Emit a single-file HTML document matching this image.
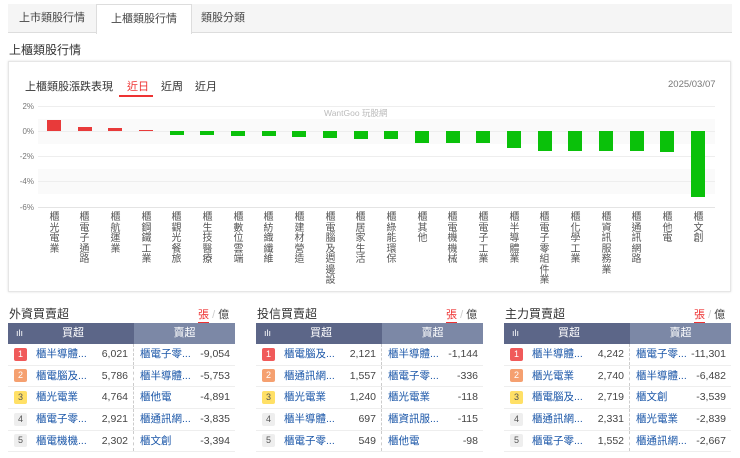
<!DOCTYPE html>
<html><head><meta charset="utf-8"><style>
*{margin:0;padding:0;box-sizing:border-box}
body{width:740px;height:458px;background:#fff;font-family:"Liberation Sans","Noto Sans CJK TC",sans-serif;position:relative;overflow:hidden;color:#333}
.a{position:absolute}
.tabs{left:8px;top:4px;width:724px;height:29px;background:#f5f5f5;border-bottom:1px solid #ddd}
.tab{position:absolute;top:0;height:29px;line-height:29px;font-size:11px;color:#444;text-align:center}
.tab.on{background:#fff;border:1px solid #ddd;border-bottom:none;height:30px}
.bar{position:absolute;width:14px}
.r{background:#e83a3a}.g{background:#0ac10a}
.lab{position:absolute;top:213px;width:11px;font-size:10px;line-height:10.5px;color:#555;word-break:break-all;text-align:center}
.yl{position:absolute;left:18px;font-size:8px;color:#777;width:16px;text-align:right}
.gl{position:absolute;left:38px;width:677px;height:1px;background:#eee}
.tb{position:absolute;top:323px;width:227px;font-size:10.5px}
.hd{display:flex;height:21px;line-height:21px;color:#fff;font-size:11px}
.hd .l{width:126px;background:#5c6688;position:relative}
.hd .l i{position:absolute;left:8px;font-size:9px;font-style:normal}
.hd .l span{position:absolute;left:54px}
.hd .rr{width:101px;background:#7c88a6;text-align:center}
.row{display:flex;height:21.7px;line-height:21px;border-bottom:1px solid #eee;white-space:nowrap}
.row>div{overflow:hidden}
.n{width:28px}
.n span{display:inline-block;margin-left:6px;width:13px;height:13px;line-height:13px;font-size:9px;text-align:center;border-radius:2px;color:#fff;vertical-align:middle}
.k{width:64px;color:#1a56a8}
.v{width:34px;text-align:right;padding-right:5px;color:#444;border-right:1px dashed #ccc}
.k2{width:62px;color:#1a56a8;padding-left:6px}
.v2{width:39px;text-align:right;padding-right:5px;color:#444}
.ph{position:absolute;top:305px;font-size:12px;color:#333}
.sw{position:absolute;top:306px;font-size:11px;color:#444}
.sw b{font-weight:normal;color:#e33;border-bottom:2px solid #e33;padding-bottom:1px}
</style></head><body>
<div class="a tabs">
<div class="tab" style="left:0;width:88px">上市類股行情</div>
<div class="tab on" style="left:88px;width:96px">上櫃類股行情</div>
<div class="tab" style="left:184px;width:62px">類股分類</div>
</div>
<div class="a" style="left:9px;top:41px;font-size:12px;color:#333">上櫃類股行情</div>
<div class="a" style="left:8px;top:61px;width:723px;height:231px;border:1px solid #e6e6e6;box-shadow:0 0 2px #ddd"></div>
<div class="a" style="left:25px;top:78px;font-size:11px;color:#333">上櫃類股漲跌表現</div>
<div class="a" style="left:127px;top:78px;font-size:11px;color:#e33">近日</div>
<div class="a" style="left:119px;top:95px;width:34px;height:2px;background:#e33"></div>
<div class="a" style="left:161px;top:78px;font-size:11px;color:#333">近周</div>
<div class="a" style="left:195px;top:78px;font-size:11px;color:#333">近月</div>
<div class="a" style="left:668px;top:79px;font-size:9.5px;color:#777">2025/03/07</div>
<div class="a" style="left:38px;top:119px;width:677px;height:25px;background:#fafafa"></div>
<div class="a" style="left:38px;top:169px;width:677px;height:25px;background:#fafafa"></div>
<div class="gl" style="top:106px"></div><div class="gl" style="top:131px"></div><div class="gl" style="top:156px"></div><div class="gl" style="top:181px"></div><div class="gl" style="top:207px;background:#e4e4e4"></div>
<div class="yl" style="top:102px">2%</div><div class="yl" style="top:127px">0%</div><div class="yl" style="top:152px">-2%</div><div class="yl" style="top:177px">-4%</div><div class="yl" style="top:203px">-6%</div>
<div class="a" style="left:324px;top:107px;font-size:8.5px;color:#bbb">WantGoo 玩股網</div>
<div class="bar r" style="left:47px;top:120px;height:11px"></div>
<div class="bar r" style="left:78px;top:127px;height:4px"></div>
<div class="bar r" style="left:108px;top:128px;height:3px"></div>
<div class="bar r" style="left:139px;top:130px;height:1px"></div>
<div class="bar g" style="left:170px;top:131px;height:4px"></div>
<div class="bar g" style="left:200px;top:131px;height:4px"></div>
<div class="bar g" style="left:231px;top:131px;height:5px"></div>
<div class="bar g" style="left:262px;top:131px;height:5px"></div>
<div class="bar g" style="left:292px;top:131px;height:6px"></div>
<div class="bar g" style="left:323px;top:131px;height:7px"></div>
<div class="bar g" style="left:354px;top:131px;height:8px"></div>
<div class="bar g" style="left:384px;top:131px;height:8px"></div>
<div class="bar g" style="left:415px;top:131px;height:12px"></div>
<div class="bar g" style="left:446px;top:131px;height:12px"></div>
<div class="bar g" style="left:476px;top:131px;height:12px"></div>
<div class="bar g" style="left:507px;top:131px;height:17px"></div>
<div class="bar g" style="left:538px;top:131px;height:20px"></div>
<div class="bar g" style="left:568px;top:131px;height:20px"></div>
<div class="bar g" style="left:599px;top:131px;height:20px"></div>
<div class="bar g" style="left:630px;top:131px;height:20px"></div>
<div class="bar g" style="left:660px;top:131px;height:21px"></div>
<div class="bar g" style="left:691px;top:131px;height:66px"></div>
<div class="lab" style="left:49px">櫃光電業</div>
<div class="lab" style="left:79px">櫃電子通路</div>
<div class="lab" style="left:110px">櫃航運業</div>
<div class="lab" style="left:141px">櫃鋼鐵工業</div>
<div class="lab" style="left:171px">櫃觀光餐旅</div>
<div class="lab" style="left:202px">櫃生技醫療</div>
<div class="lab" style="left:233px">櫃數位雲端</div>
<div class="lab" style="left:263px">櫃紡織纖維</div>
<div class="lab" style="left:294px">櫃建材營造</div>
<div class="lab" style="left:325px">櫃電腦及週邊設</div>
<div class="lab" style="left:355px">櫃居家生活</div>
<div class="lab" style="left:386px">櫃綠能環保</div>
<div class="lab" style="left:417px">櫃其他</div>
<div class="lab" style="left:447px">櫃電機機械</div>
<div class="lab" style="left:478px">櫃電子工業</div>
<div class="lab" style="left:509px">櫃半導體業</div>
<div class="lab" style="left:539px">櫃電子零組件業</div>
<div class="lab" style="left:570px">櫃化學工業</div>
<div class="lab" style="left:601px">櫃資訊服務業</div>
<div class="lab" style="left:631px">櫃通訊網路</div>
<div class="lab" style="left:662px">櫃他電</div>
<div class="lab" style="left:693px">櫃文創</div>

<div class="ph" style="left:9px">外資買賣超</div><div class="sw" style="left:198px"><b>張</b> <span style="color:#ccc">/</span> 億</div>
<div class="ph" style="left:257px">投信買賣超</div><div class="sw" style="left:446px"><b>張</b> <span style="color:#ccc">/</span> 億</div>
<div class="ph" style="left:505px">主力買賣超</div><div class="sw" style="left:694px"><b>張</b> <span style="color:#ccc">/</span> 億</div>

<div class="tb" style="left:8px">
<div class="hd"><div class="l"><i>ılı</i><span>買超</span></div><div class="rr">賣超</div></div>
<div class="row"><div class="n"><span style="background:#f05a5a">1</span></div><div class="k">櫃半導體...</div><div class="v">6,021</div><div class="k2">櫃電子零...</div><div class="v2">-9,054</div></div>
<div class="row"><div class="n"><span style="background:#f5a070">2</span></div><div class="k">櫃電腦及...</div><div class="v">5,786</div><div class="k2">櫃半導體...</div><div class="v2">-5,753</div></div>
<div class="row"><div class="n"><span style="background:#ffe066;color:#555">3</span></div><div class="k">櫃光電業</div><div class="v">4,764</div><div class="k2">櫃他電</div><div class="v2">-4,891</div></div>
<div class="row"><div class="n"><span style="background:#eee;color:#555">4</span></div><div class="k">櫃電子零...</div><div class="v">2,921</div><div class="k2">櫃通訊網...</div><div class="v2">-3,835</div></div>
<div class="row"><div class="n"><span style="background:#eee;color:#555">5</span></div><div class="k">櫃電機機...</div><div class="v">2,302</div><div class="k2">櫃文創</div><div class="v2">-3,394</div></div>
</div>
<div class="tb" style="left:256px">
<div class="hd"><div class="l"><i>ılı</i><span>買超</span></div><div class="rr">賣超</div></div>
<div class="row"><div class="n"><span style="background:#f05a5a">1</span></div><div class="k">櫃電腦及...</div><div class="v">2,121</div><div class="k2">櫃半導體...</div><div class="v2">-1,144</div></div>
<div class="row"><div class="n"><span style="background:#f5a070">2</span></div><div class="k">櫃通訊網...</div><div class="v">1,557</div><div class="k2">櫃電子零...</div><div class="v2">-336</div></div>
<div class="row"><div class="n"><span style="background:#ffe066;color:#555">3</span></div><div class="k">櫃光電業</div><div class="v">1,240</div><div class="k2">櫃光電業</div><div class="v2">-118</div></div>
<div class="row"><div class="n"><span style="background:#eee;color:#555">4</span></div><div class="k">櫃半導體...</div><div class="v">697</div><div class="k2">櫃資訊服...</div><div class="v2">-115</div></div>
<div class="row"><div class="n"><span style="background:#eee;color:#555">5</span></div><div class="k">櫃電子零...</div><div class="v">549</div><div class="k2">櫃他電</div><div class="v2">-98</div></div>
</div>
<div class="tb" style="left:504px">
<div class="hd"><div class="l"><i>ılı</i><span>買超</span></div><div class="rr">賣超</div></div>
<div class="row"><div class="n"><span style="background:#f05a5a">1</span></div><div class="k">櫃半導體...</div><div class="v">4,242</div><div class="k2" style="width:59px">櫃電子零...</div><div class="v2" style="width:42px">-11,301</div></div>
<div class="row"><div class="n"><span style="background:#f5a070">2</span></div><div class="k">櫃光電業</div><div class="v">2,740</div><div class="k2" style="width:59px">櫃半導體...</div><div class="v2" style="width:42px">-6,482</div></div>
<div class="row"><div class="n"><span style="background:#ffe066;color:#555">3</span></div><div class="k">櫃電腦及...</div><div class="v">2,719</div><div class="k2" style="width:59px">櫃文創</div><div class="v2" style="width:42px">-3,539</div></div>
<div class="row"><div class="n"><span style="background:#eee;color:#555">4</span></div><div class="k">櫃通訊網...</div><div class="v">2,331</div><div class="k2" style="width:59px">櫃光電業</div><div class="v2" style="width:42px">-2,839</div></div>
<div class="row"><div class="n"><span style="background:#eee;color:#555">5</span></div><div class="k">櫃電子零...</div><div class="v">1,552</div><div class="k2" style="width:59px">櫃通訊網...</div><div class="v2" style="width:42px">-2,667</div></div>
</div>
</body></html>
